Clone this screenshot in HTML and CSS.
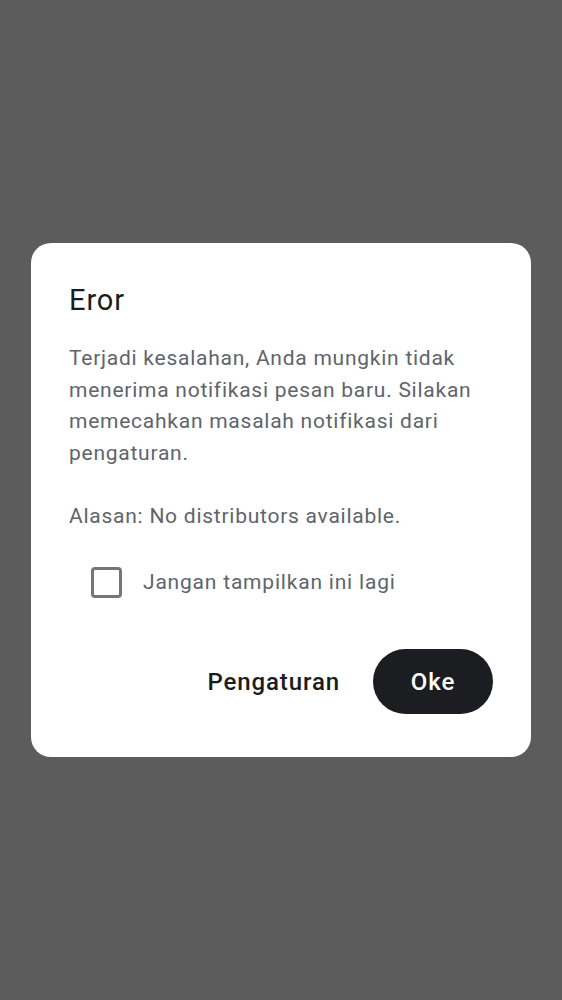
FILE: index.html
```html
<!DOCTYPE html>
<html lang="id">
<head>
<meta charset="utf-8">
<link rel="stylesheet" href="styles.css">
</head>
<body>
<div class="scrim">
  <div class="dialog">
    <h1 class="title">Eror</h1>
    <p class="body">Terjadi kesalahan, Anda mungkin tidak menerima notifikasi pesan baru. Silakan memecahkan masalah notifikasi dari pengaturan.</p>
    <p class="body reason">Alasan: No distributors available.</p>
    <label class="check-row">
      <span class="box"></span>
      <span class="check-label">Jangan tampilkan ini lagi</span>
    </label>
    <div class="actions">
      <button class="btn text-btn">Pengaturan</button>
      <button class="btn filled-btn">Oke</button>
    </div>
  </div>
</div>
</body>
</html>
```

FILE: styles.css
```css
* { box-sizing: border-box; }
html, body { margin: 0; padding: 0; }
body {
  font-family: Roboto, "Noto Sans", sans-serif;
  background: #5c5c5c;
}
.scrim {
  width: 562px;
  height: 1000px;
  display: flex;
  align-items: flex-start;
  justify-content: center;
  padding-top: 243px;
}
.dialog {
  width: 500px;
  background: #ffffff;
  border-radius: 20px;
  padding: 38px 38px 43px 38px;
}
.title {
  margin: 0;
  font-size: 29px;
  font-weight: 400;
  color: #1b1c20;
  line-height: 38px;
  letter-spacing: 0.9px;
}
.body {
  margin: 0;
  margin-top: 24px;
  font-size: 21px;
  line-height: 31.5px;
  color: #60646c;
  letter-spacing: 0.75px;
}
.reason { margin-top: 31.5px; }
.check-row {
  display: flex;
  align-items: center;
  margin-top: 34.5px;
  padding-left: 22px;
  gap: 21px;
}
.box {
  flex: none;
  width: 31px;
  height: 31px;
  border: 3px solid #72777f;
  border-radius: 4px;
}
.check-label {
  font-size: 21px;
  color: #60646c;
  letter-spacing: 0.8px;
}
.actions {
  display: flex;
  justify-content: flex-end;
  align-items: center;
  margin-top: 51.5px;
  gap: 10px;
}
.btn {
  font-family: Roboto, "Noto Sans", sans-serif;
  font-size: 24px;
  font-weight: 500;
  letter-spacing: 0.9px;
  border: none;
  height: 65px;
  border-radius: 33px;
  padding: 0 23px;
  cursor: pointer;
}
.text-btn {
  background: transparent;
  color: #1b1c20;
}
.filled-btn {
  background: #1c1d21;
  color: #ffffff;
  width: 120px;
  padding: 0;
}
```
